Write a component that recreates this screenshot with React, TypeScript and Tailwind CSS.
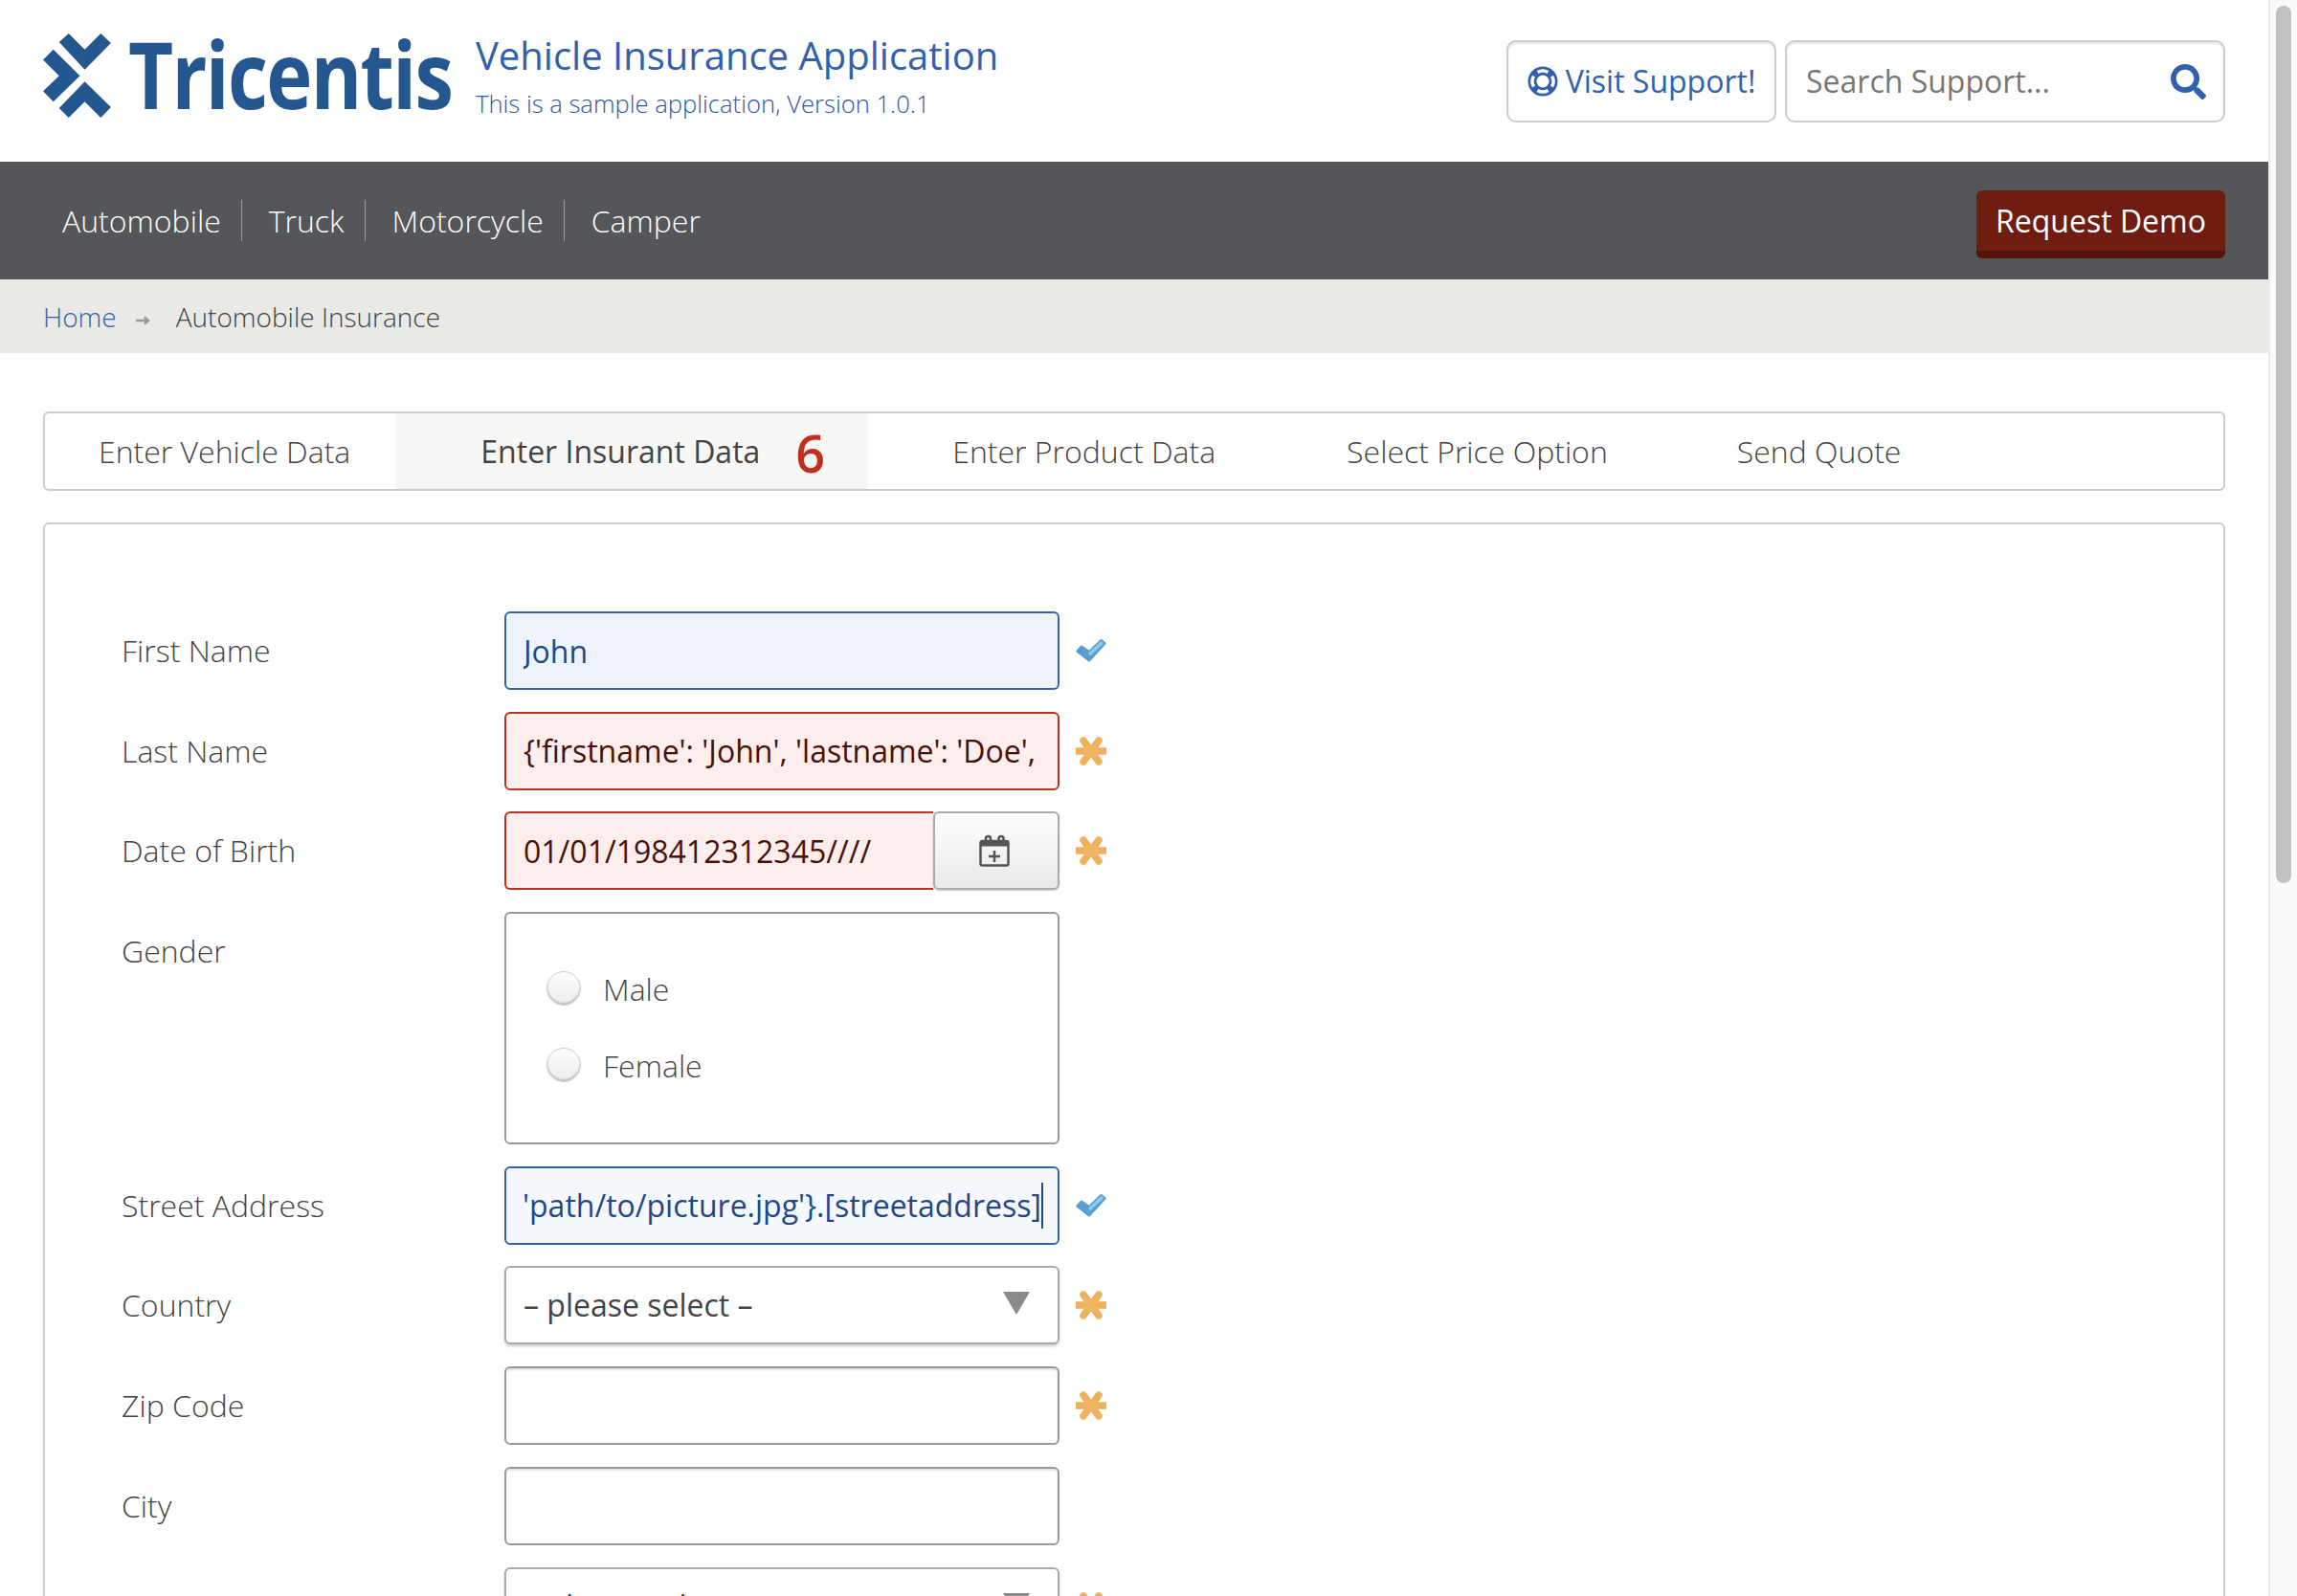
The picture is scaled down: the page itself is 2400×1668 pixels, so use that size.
import type { ReactNode } from "react";
import { FaSearch } from "react-icons/fa";

const navItems = ["Automobile", "Truck", "Motorcycle", "Camper"];

function Check() {
  return (
    <svg width="32" height="26" viewBox="0 0 32 26" className="ml-[17px] shrink-0">
      <path d="M2 13.5 L6 9 L14 14.5 L26.5 2.5 L30 5.5 L14 23 Z" fill="#5a9fce" stroke="#5a9fce" strokeWidth="3" strokeLinejoin="round" />
      <path d="M15 16 L27 5" fill="none" stroke="#8ccbed" strokeWidth="3.5" strokeLinecap="round" />
    </svg>
  );
}

function Asterisk() {
  return (
    <svg width="32" height="30" viewBox="0 0 32 30" className="ml-[17px] shrink-0">
      <path d="M1 15 H31 M8 4 L24 26 M24 4 L8 26" fill="none" stroke="#eeb05c" strokeWidth="7.5" strokeLinecap="round" />
      <circle cx="16" cy="15" r="7" fill="#f0b462" />
    </svg>
  );
}

function LifeRing() {
  return (
    <svg width="32" height="32" viewBox="0 0 32 32" className="shrink-0">
      <circle cx="16" cy="16" r="15.5" fill="#3260ab" />
      <circle cx="16" cy="16" r="6.5" fill="white" />
      <path
        d="M10.5 6.5 A11 11 0 0 1 21.5 6.5 M10.5 25.5 A11 11 0 0 0 21.5 25.5 M6.5 10.5 A11 11 0 0 0 6.5 21.5 M25.5 10.5 A11 11 0 0 1 25.5 21.5"
        fill="none"
        stroke="white"
        strokeWidth="3.5"
      />
    </svg>
  );
}

function Row({ label, mark, top, children }: { label: string; mark?: "check" | "star"; top?: boolean; children: ReactNode }) {
  return (
    <div className={top ? "flex items-start" : "flex items-center"}>
      <label className={top ? "w-[400px] shrink-0 pt-[20px] text-[32px] leading-[42px] font-light text-[#444]" : "w-[400px] shrink-0 text-[32px] leading-[42px] font-light text-[#444]"}>
        {label}
      </label>
      {children}
      {mark === "check" && <Check />}
      {mark === "star" && <Asterisk />}
    </div>
  );
}

const plainInput =
  "h-[82px] w-[580px] shrink-0 rounded-[6px] border-2 border-[#999] bg-white px-[17px] text-[32px] shadow-[inset_0_2px_2px_rgba(0,0,0,0.12)] outline-none";
const errorInput =
  "h-[82px] rounded-[6px] border-2 border-[#c0301c] bg-[#fbeeec] pl-[18px] pr-[20px] text-[32px] text-[#4a0f06] outline-none";

function Select() {
  return (
    <div className="flex h-[82px] w-[580px] shrink-0 items-center justify-between rounded-[6px] border-2 border-[#aaa] bg-white pl-[18px] pr-[29px] text-[32px] text-[#444] shadow-[0_2px_3px_rgba(0,0,0,0.2)]">
      <span>– please select –</span>
      <svg width="28" height="24" viewBox="0 0 28 24" className="-mt-[4px]">
        <path d="M0 0 H28 L14 24 Z" fill="#8a8a8a" />
      </svg>
    </div>
  );
}

function Radio({ label }: { label: string }) {
  return (
    <div className="flex h-[40px] items-center">
      <span className="-mt-[3px] h-[36px] w-[36px] rounded-full border border-[#ccc] bg-gradient-to-b from-[#fdfdfd] to-[#ececec] shadow-[inset_0_-2px_2px_rgba(0,0,0,0.2)]" />
      <span className="ml-[23px] text-[32px] leading-[40px] font-light text-[#444]">{label}</span>
    </div>
  );
}

export default function App() {
  return (
    <div className="flex h-[1668px] w-[2400px] overflow-hidden bg-white font-['Open_Sans',sans-serif]">
      <div className="w-[2370px] shrink-0">
        {/* Header */}
        <header className="flex h-[169px] items-start justify-between pl-[45px] pr-[45px]">
          <div className="flex items-start">
            <svg width="71" height="88" viewBox="75 45 212 263" className="mt-[35px] shrink-0">
              <path d="M125 72 L155 45 L205 95 L255 45 L287 75 L205 158 Z" fill="#24568f" />
              <path d="M125 278 L205 195 L287 275 L255 308 L205 258 L155 308 Z" fill="#24568f" />
              <path d="M75 127 L107 95 L190 177 L107 258 L75 225 L125 177 Z" fill="#24568f" />
            </svg>
            <div className="ml-[18px] mt-[16px] w-[363px] origin-left scale-x-[0.84] text-[97px] leading-[120px] font-bold tracking-[-2px] whitespace-nowrap text-[#24568f] blur-[0.5px]">Tricentis</div>
            <div className="mt-[32px]">
              <div className="text-[40px] leading-[52px] text-[#3260ab]">Vehicle Insurance Application</div>
              <div className="mt-[8px] text-[25.6px] leading-[34px] font-light text-[#2b58a3]">This is a sample application, Version 1.0.1</div>
            </div>
          </div>
          <div className="mt-[42px] flex gap-[9px]">
            <a className="flex h-[86px] w-[282px] items-center justify-center gap-[8px] rounded-[10px] border-2 border-[#ccc] text-[32px] text-[#3260ab] shadow-[inset_0_2px_2px_rgba(0,0,0,0.1)]">
              <LifeRing />
              Visit Support!
            </a>
            <div className="flex h-[86px] w-[460px] items-center justify-between rounded-[10px] border-2 border-[#ccc] pl-[20px] pr-[18px] shadow-[inset_0_2px_2px_rgba(0,0,0,0.1)]">
              <input readOnly placeholder="Search Support..." className="w-[340px] bg-transparent text-[32px] text-[#333] outline-none placeholder:text-[#777]" />
              <FaSearch className="h-[37px] w-[37px] text-[#3260ab]" />
            </div>
          </div>
        </header>

        {/* Nav */}
        <nav className="flex h-[123px] items-center justify-between bg-[#55565a] pl-[65px] pr-[45px]">
          <ul className="flex items-center">
            {navItems.map((item, i) => (
              <li
                key={item}
                className={
                  i < navItems.length - 1
                    ? "mr-[28px] flex h-[43px] items-center border-r border-[#9a9b9e] pr-[21px] text-[32px] font-light text-white"
                    : "flex h-[43px] items-center text-[32px] font-light text-white"
                }
              >
                {item}
              </li>
            ))}
          </ul>
          <button className="mt-[8px] h-[71px] w-[260px] rounded-[6px] border-b-[8px] border-[#541409] bg-[#6f1c11] pt-[1px] text-[32px] text-white">Request Demo</button>
        </nav>

        {/* Breadcrumb */}
        <div className="flex h-[77px] items-center bg-[#e9e9e5] pl-[45px] text-[28px] font-light">
          <span className="text-[#3260ab]">Home</span>
          <svg width="16" height="10" viewBox="0 0 16 10" className="ml-[20px] mr-[26px] mt-[8px]">
            <path d="M0 5 H12 M9 1.5 L13 5 L9 8.5" fill="none" stroke="#999" strokeWidth="2.5" />
          </svg>
          <span className="text-[#444]">Automobile Insurance</span>
        </div>

        <main className="px-[45px] pt-[61px]">
          {/* Tabs */}
          <ul className="flex h-[83px] items-stretch rounded-[6px] border-2 border-[#ccc] text-[32px] font-light text-[#444]">
            <li className="flex items-center pl-[56px] pr-[47px]">Enter Vehicle Data</li>
            <li className="flex items-center bg-[#f7f7f5] pl-[89px] pr-[45px] font-medium">
              Enter Insurant Data
              <span className="ml-[37px] mt-[2px] text-[54px] leading-none font-semibold text-[#c0301c]">6</span>
            </li>
            <li className="flex items-center pl-[88px] pr-[48px]">Enter Product Data</li>
            <li className="flex items-center pl-[89px] pr-[48px]">Select Price Option</li>
            <li className="flex items-center pl-[87px] pr-[48px]">Send Quote</li>
          </ul>

          {/* Form */}
          <form className="mt-[33px] flex h-[1200px] flex-col gap-[22.7px] rounded-[6px] border-2 border-[#ccc] pl-[80px] pt-[91px]">
            <Row label="First Name" mark="check">
              <input readOnly value="John" className="h-[82px] w-[580px] rounded-[6px] border-2 border-[#3263ab] bg-[#eff4fc] pl-[18px] pr-[17px] text-[32px] text-[#1f4788] outline-none" />
            </Row>
            <Row label="Last Name" mark="star">
              <input readOnly value="{'firstname': 'John', 'lastname': 'Doe', 'picture': 'path/to/picture.jpg'}" className={errorInput + " w-[580px]"} />
            </Row>
            <Row label="Date of Birth" mark="star">
              <div className="flex w-[580px] shrink-0">
                <input readOnly value="01/01/198412312345////" className={errorInput + " w-[448px] rounded-r-none border-r-0"} />
                <button type="button" className="flex h-[82px] w-[132px] items-center justify-center rounded-[6px] border-2 border-[#aaa] bg-gradient-to-b from-white to-[#e8e8e6] shadow-[0_1px_2px_rgba(0,0,0,0.2)]">
                  <svg width="32" height="34" viewBox="0 0 32 34" fill="none" stroke="#555" strokeWidth="2.5" className="-ml-[4px]">
                    <rect x="1.5" y="7" width="29" height="25.5" rx="2" />
                    <path d="M1.5 10 H30.5" strokeWidth="5" />
                    <path d="M7 8 V4.5 a2.5 2.5 0 0 1 5 0 V8 M20.5 8 V4.5 a2.5 2.5 0 0 1 5 0 V8" />
                    <path d="M16 17 V29 M10 23 H22" />
                  </svg>
                </button>
              </div>
            </Row>
            <Row label="Gender" top>
              <div className="flex h-[243px] w-[580px] shrink-0 flex-col gap-[40px] rounded-[6px] border-2 border-[#999] pl-[42px] pt-[59px]">
                <Radio label="Male" />
                <Radio label="Female" />
              </div>
            </Row>
            <Row label="Street Address" mark="check">
              <div className="flex h-[82px] w-[580px] shrink-0 items-center overflow-hidden rounded-[6px] border-2 border-[#3263ab] bg-[#f5f9fd] pl-[17px] text-[32px] whitespace-nowrap text-[#1f4788]">
                <span className="border-r-2 border-[#1f4788]">{"'path/to/picture.jpg'}.[streetaddress]"}</span>
              </div>
            </Row>
            <Row label="Country" mark="star">
              <Select />
            </Row>
            <Row label="Zip Code" mark="star">
              <input readOnly className={plainInput} />
            </Row>
            <Row label="City">
              <input readOnly className={plainInput} />
            </Row>
            <Row label="Occupation" mark="star">
              <Select />
            </Row>
          </form>
        </main>
      </div>

      {/* Scrollbar */}
      <aside className="w-[30px] shrink-0 border-l-2 border-[#ebebeb] bg-[#fafafa] pl-[6px] pt-[6px]">
        <div className="h-[917px] w-[16px] rounded-full bg-[#c1c1c1]" />
      </aside>
    </div>
  );
}
